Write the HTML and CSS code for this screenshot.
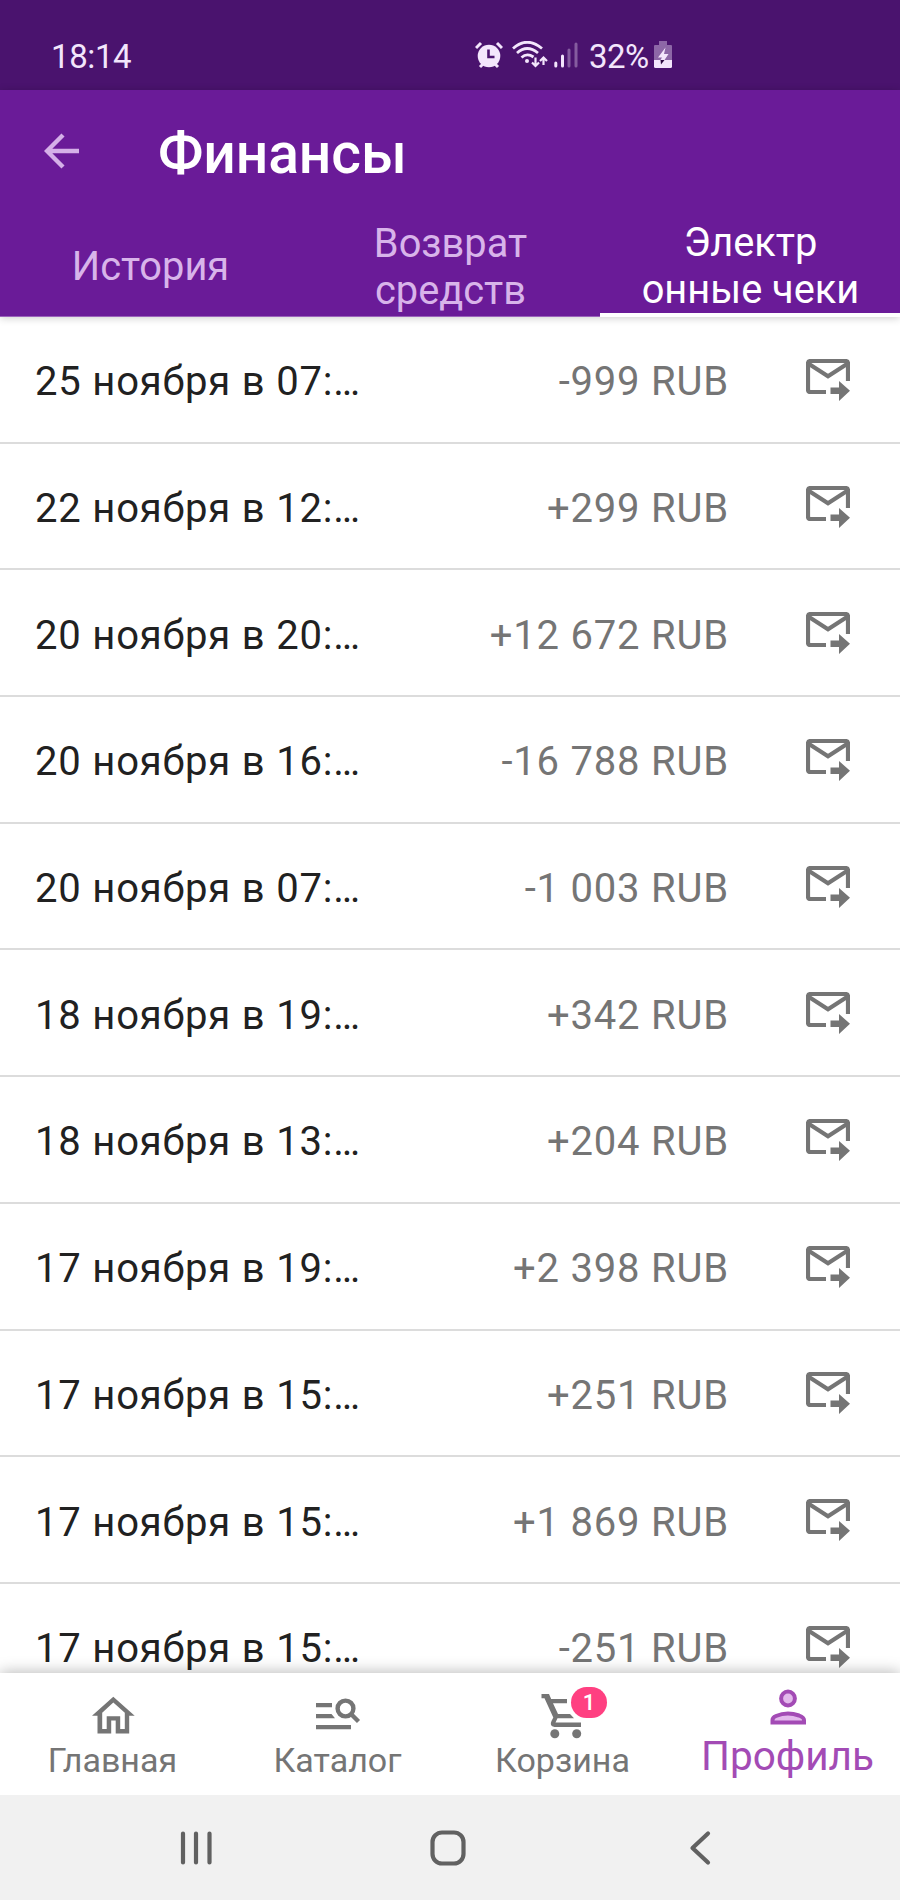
FILE: index.html
```html
<!DOCTYPE html>
<html lang="ru">
<head>
<meta charset="utf-8">
<title>Финансы</title>
<link rel="stylesheet" href="styles.css">
</head>
<body>
<svg class="defs" aria-hidden="true">
  <symbol id="mail" viewBox="0 0 44 42">
    <path d="M20 33H4.500Q2 33 2 30.500V4.500Q2 2 4.500 2H39.500Q42 2 42 4.500V22" fill="none" stroke="currentColor" stroke-width="4.200"/>
    <path d="M3 5 22 17.200 41 5" fill="none" stroke="currentColor" stroke-width="4.200"/>
    <path d="M24.500 28.500H33V22L44 31.700 33 42V35H24.500Z" fill="currentColor"/>
  </symbol>
</svg>
<div class="app">
  <div class="status">
    <span class="time">18:14</span>
    <div class="status-icons">
      <svg class="alarm" viewBox="0 0 28 28">
        <g fill="none" stroke="currentColor" stroke-width="3"><path d="M1 7 6 2M27 7 22 2M5 26 9 22M23 26 19 22"/></g>
        <circle cx="14" cy="15" r="11.300" fill="currentColor"/>
        <path d="M13.500 8.500V16H19.500" class="cut"/>
      </svg>
      <svg class="wifi" viewBox="0 0 36 28" fill="none" stroke="currentColor" stroke-width="2.800">
        <path d="M1 7.500Q15-5 30 7.500M5 12Q15 3 26 12M9.500 16.500Q15 11.500 21.500 16"/>
        <circle cx="15" cy="20" r="2" fill="currentColor" stroke="none"/>
        <path d="M23.500 16.500V25M20 21.500 23.500 25 27 21.500M31.500 24V17M28 20 31.500 16.500 35 20" stroke-width="2.200"/>
      </svg>
      <svg class="signal" viewBox="0 0 24 26" fill="none" stroke="currentColor" stroke-width="3" stroke-linecap="round">
        <path d="M1.800 21V24M8.500 14V24"/><path d="M15 8V24M22 2V24" opacity=".35"/>
      </svg>
      <span class="percent">32%</span>
      <svg class="battery" viewBox="0 0 18 28">
        <path d="M5 0H13V4H17Q18 4 18 5V19H0V5Q0 4 1 4H5Z" fill="currentColor" opacity=".4"/>
        <path d="M0 19H18V25.500Q18 27 16.500 27H1.500Q0 27 0 25.500Z" fill="currentColor"/>
        <path d="M11.500 6.500 4 16.500H8L6.500 19H10.500L14.500 13H10Z" fill="currentColor"/>
        <path d="M6.500 19H10.500L7 23.500Z" class="bolt"/>
      </svg>
    </div>
  </div>
  <header class="header">
    <div class="toolbar">
      <svg class="back" viewBox="0 0 36 36" fill="none" stroke="currentColor" stroke-width="4.400"><path d="M35 18H3M19 2 3 18 19 34"/></svg>
      <h1>Финансы</h1>
    </div>
    <nav class="tabs">
      <div class="tab">История</div>
      <div class="tab">Возврат<br>средств</div>
      <div class="tab active">Электр<br>онные чеки</div>
    </nav>
  </header>
  <main class="list">
    <div class="row"><span class="date">25 ноября в 07:…</span><span class="sum">-999 RUB</span><svg class="mail"><use href="#mail"/></svg></div>
    <div class="row"><span class="date">22 ноября в 12:…</span><span class="sum">+299 RUB</span><svg class="mail"><use href="#mail"/></svg></div>
    <div class="row"><span class="date">20 ноября в 20:…</span><span class="sum">+12 672 RUB</span><svg class="mail"><use href="#mail"/></svg></div>
    <div class="row"><span class="date">20 ноября в 16:…</span><span class="sum">-16 788 RUB</span><svg class="mail"><use href="#mail"/></svg></div>
    <div class="row"><span class="date">20 ноября в 07:…</span><span class="sum">-1 003 RUB</span><svg class="mail"><use href="#mail"/></svg></div>
    <div class="row"><span class="date">18 ноября в 19:…</span><span class="sum">+342 RUB</span><svg class="mail"><use href="#mail"/></svg></div>
    <div class="row"><span class="date">18 ноября в 13:…</span><span class="sum">+204 RUB</span><svg class="mail"><use href="#mail"/></svg></div>
    <div class="row"><span class="date">17 ноября в 19:…</span><span class="sum">+2 398 RUB</span><svg class="mail"><use href="#mail"/></svg></div>
    <div class="row"><span class="date">17 ноября в 15:…</span><span class="sum">+251 RUB</span><svg class="mail"><use href="#mail"/></svg></div>
    <div class="row"><span class="date">17 ноября в 15:…</span><span class="sum">+1 869 RUB</span><svg class="mail"><use href="#mail"/></svg></div>
    <div class="row"><span class="date">17 ноября в 15:…</span><span class="sum">-251 RUB</span><svg class="mail"><use href="#mail"/></svg></div>
  </main>
  <nav class="bottom">
    <div class="item">
      <svg class="icon" viewBox="0 0 54 54"><path d="M27.300 6.700 6 25.700H11.500V43.500H25.200V30.500H29.700V43.500H43.200V25.700H48.700ZM27.300 12.500 38.800 22.700V39H34.200V26.200H20.700V39H16.200V22.700Z" fill="currentColor" fill-rule="evenodd"/></svg>
      <span>Главная</span>
    </div>
    <div class="item">
      <svg class="icon" viewBox="0 0 54 54"><path d="M5 13H21V17.200H5ZM5 24H20.500L24 28.200H5ZM5 35H40V39.300H5Z" fill="currentColor"/><circle cx="34.500" cy="18.500" r="7.900" fill="none" stroke="currentColor" stroke-width="4.400"/><path d="M39.500 23.500 47.500 31.500" stroke="currentColor" stroke-width="4.400"/></svg>
      <span>Каталог</span>
    </div>
    <div class="item">
      <svg class="icon" viewBox="0 0 54 54"><path d="M5.500 4H13L15.200 9H31V13.300H17L22 24H34L38 28.300H21.500L19.500 32.500H45V37H18.500Q13 36 15.500 31L17.300 27.500 8.500 8.300H5.500Z" fill="currentColor"/><circle cx="18.800" cy="43.700" r="4.500" fill="currentColor"/><circle cx="40.700" cy="43.700" r="4.500" fill="currentColor"/></svg>
      <b class="badge">1</b>
      <span>Корзина</span>
    </div>
    <div class="item selected">
      <svg class="icon" viewBox="0 0 54 54" stroke="currentColor" stroke-width="4"><circle cx="27" cy="14.500" r="6.900" class="tint"/><path d="M11.500 38.500V36Q11.500 33.500 15 32 26 27.500 38 31.500 43 33.500 43 36V38.500Z" class="tint"/></svg>
      <span>Профиль</span>
    </div>
  </nav>
  <div class="sysbar">
    <svg viewBox="0 0 40 40"><path d="M7 5.500V34.500M20 5.500V34.500M33.500 5.500V34.500"/></svg>
    <svg viewBox="0 0 40 40"><rect x="4.500" y="4.500" width="31" height="31" rx="9.500"/></svg>
    <svg viewBox="0 0 40 40"><path d="M28 5.500 12.500 20 28 34.500"/></svg>
  </div>
</div>
</body>
</html>
```
FILE: styles.css
```css
* { box-sizing: border-box; }
body { margin: 0; font-family: Roboto, "Noto Sans", sans-serif; background: #fff; }
svg { display: block; flex: none; }
.defs { position: absolute; width: 0; height: 0; }
.app { width: 900px; height: 1900px; display: flex; flex-direction: column; overflow: hidden; white-space: nowrap; }

.status { height: 90px; flex: none; background: #4a136e; color: #f3e6fc; font-size: 33px; line-height: 40px; padding: 37px 0 0 51px; display: flex; }
.time { width: 424px; letter-spacing: -.4px; }
.status-icons { display: flex; align-items: flex-start; height: 40px; }
.alarm { width: 28px; height: 28px; margin: 4px 9px 0 0; }
.wifi { width: 36px; height: 28px; margin: 4px 6px 0 0; }
.signal { width: 24px; height: 26px; margin: 5px 11px 0 0; }
.percent { width: 65px; letter-spacing: -.5px; }
.battery { width: 18px; height: 28px; margin-top: 4px; }
.cut { fill: none; stroke: #4a136e; stroke-width: 2.6px; }
.bolt { fill: #2c0b42; }

.header { height: 227px; flex: none; background: #6a1b98; color: #fff; position: relative; z-index: 1; box-shadow: 0 1px 8px rgba(0,0,0,.2); }
.toolbar { height: 126px; padding: 0 0 0 44px; display: flex; align-items: center; }
.back { width: 36px; height: 36px; color: #d5b0e8; margin: 0 78px 4px 0; }
h1 { margin: 2px 0 0; font-size: 57px; line-height: 66px; font-weight: 500; letter-spacing: -.1px; }
.tabs { height: 101px; display: grid; grid-template: 101px / repeat(3, 1fr); }
.tab { display: flex; align-items: center; justify-content: center; text-align: center; font-size: 39.800px; line-height: 47px; color: #d8b4ea; border-bottom: 1px solid #9a62bb; padding: 1px 0 0 1px; }
.tab.active { color: #fff; border-bottom: 4px solid #fff; padding-top: 3px; }

.list { height: 1356px; flex: none; overflow: hidden; background: #fff; }
.row { height: 126.700px; border-bottom: 2px solid #dcdcdc; padding: 6px 50px 0 35px; display: flex; align-items: center; font-size: 40px; line-height: 48px; letter-spacing: .8px; }
.date { color: #212121; flex: 1; }
.sum { color: #757575; }
.mail { width: 44px; height: 42px; margin: 0 0 5px 77px; color: #757575; }

.bottom { height: 122px; flex: none; display: grid; grid-template-columns: repeat(4, 225px); background: #fff; position: relative; box-shadow: 0 -1px 14px rgba(0,0,0,.28); }
.item { position: relative; display: flex; flex-direction: column; align-items: center; padding-top: 17px; font-size: 34px; line-height: 40px; color: #757575; }
.icon { width: 54px; height: 54px; }
.item span { margin-top: -4px; }
.badge { position: absolute; left: 121px; top: 14px; width: 36px; height: 31px; border-radius: 15.500px; background: #ff4081; color: #fff; font-size: 22px; line-height: 31px; font-weight: 500; text-align: center; }
.item.selected { color: #a34bb5; font-size: 40.500px; padding-top: 11px; }
.item.selected span { margin-top: -2px; }
.tint { fill: #e3b9ec; }

.sysbar { height: 105px; flex: none; background: #f1f1f1; position: relative; display: flex; justify-content: space-between; align-items: center; padding: 1px 180px 0 176px; }
.sysbar svg { width: 40px; height: 40px; fill: none; stroke: #616161; stroke-width: 4.200px; stroke-linecap: round; stroke-linejoin: round; }
```
